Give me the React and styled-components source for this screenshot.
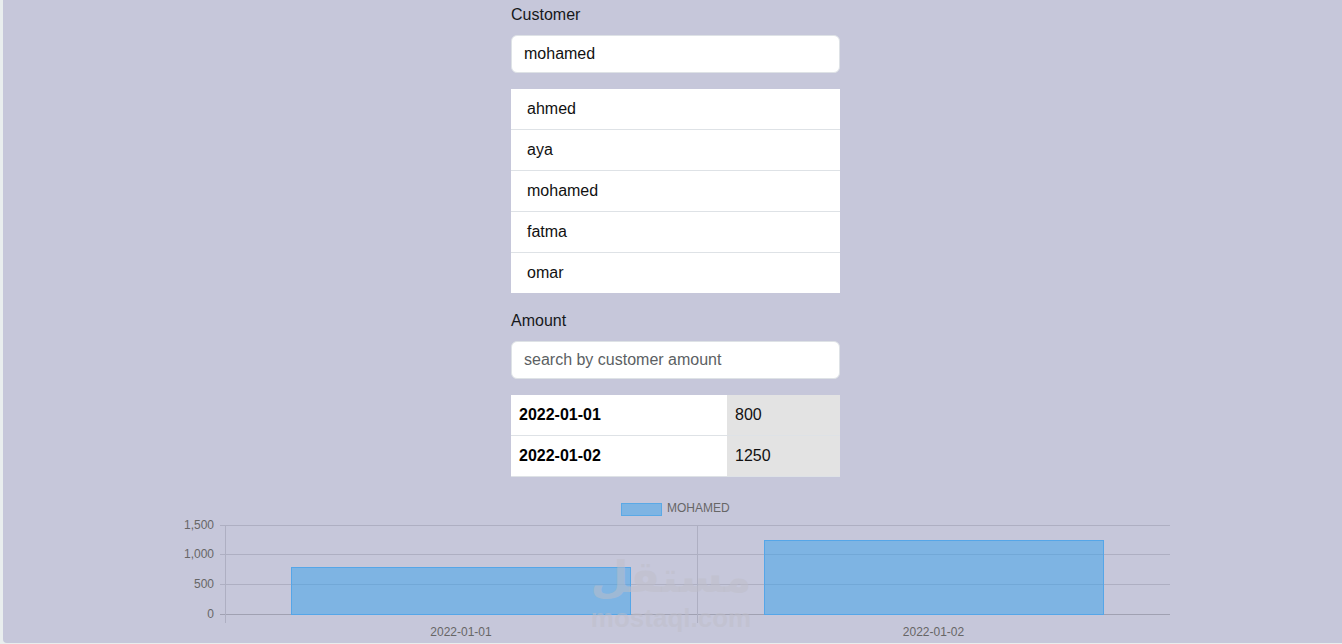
import React from 'react'
import styled, { createGlobalStyle } from 'styled-components'

const customers = ['ahmed', 'aya', 'mohamed', 'fatma', 'omar']
const amounts = [
  { date: '2022-01-01', amount: 800 },
  { date: '2022-01-02', amount: 1250 },
]
const ticks = [
  { label: '1,500', y: 525.5 },
  { label: '1,000', y: 554.5 },
  { label: '500', y: 584.5 },
  { label: '0', y: 614.5 },
]
const CHART_TOP = 495

const GlobalStyle = createGlobalStyle`
  html, body {
    margin: 0;
    height: 100%;
    overflow: hidden;
    background: #e9eeee;
  }
  body {
    font-family: "Liberation Sans", Arial, sans-serif;
  }
`

const Screen = styled.div`
  position: relative;
  box-sizing: border-box;
  height: 643px;
  margin-left: 3px;
  padding-left: 6px;
  background: #c6c7da;
  border-bottom-left-radius: 4px;
  overflow: hidden;
`

const Form = styled.div`
  width: 329px;
  margin: 0 auto;
  display: flex;
  flex-direction: column;
`

const Label = styled.label`
  font-size: 16px;
  line-height: 18px;
  color: #16181b;
  margin: ${(p) => p.$top || 6}px 0 11px;
`

const Input = styled.input`
  box-sizing: border-box;
  width: 100%;
  height: 38px;
  padding: 0 12px;
  border: 1px solid #dee2e6;
  border-radius: 6px;
  background: #fff;
  font: 16px "Liberation Sans", Arial, sans-serif;
  color: #111;
  outline: none;

  &::placeholder {
    color: #5c5f63;
    opacity: 1;
  }
`

const CustomerList = styled.ul`
  list-style: none;
  margin: 16px 0 0;
  padding: 0;
  background: #fff;
`

const CustomerItem = styled.li`
  box-sizing: border-box;
  height: 41px;
  padding: 0 16px;
  display: flex;
  align-items: center;
  font-size: 16px;
  color: #111;
  border-bottom: 1px solid #dee2e6;

  &:last-child {
    height: 40px;
    border-bottom: 0;
  }
`

const AmountTable = styled.table`
  width: 329px;
  margin-top: 16px;
  border-collapse: separate;
  border-spacing: 0;
  table-layout: fixed;
  font-size: 16px;
  color: #111;
`

const DateCell = styled.th`
  box-sizing: border-box;
  width: 216px;
  height: 41px;
  padding: 0 8px;
  border-bottom: 1px solid #dee2e6;
  background: #fff;
  color: #000;
  text-align: left;
  font-weight: 700;
`

const ValueCell = styled.td`
  box-sizing: border-box;
  height: 41px;
  padding: 0 8px;
  border-bottom: 1px solid #dee2e6;
  background: #e3e3e3;
`

const Chart = styled.svg`
  display: block;
  width: 991px;
  height: 148px;
  margin: 18px auto 0;
`

const AxisText = styled.text`
  font: 12px "Liberation Sans", Arial, sans-serif;
  fill: #666;
`

const Watermark = styled.div`
  position: absolute;
  left: 586px;
  top: 550px;
  width: 170px;
  text-align: center;
  color: rgba(190, 190, 200, 0.5);
  pointer-events: none;
`

const WatermarkArabic = styled.div`
  font: 700 44px/54px "DejaVu Sans", sans-serif;
  margin-bottom: 1px;
`

const WatermarkLatin = styled.div`
  font: 700 26px/26px "Liberation Sans", Arial, sans-serif;
`

// the chart coordinates below are page pixels, shifted into the svg box
const X = (x) => x - 180
const Y = (y) => y - CHART_TOP

const BarChart = () => (
  <Chart viewBox="0 0 991 148">
    <rect x={X(621.5)} y={Y(503.5)} width="40" height="12" fill="rgba(54,162,235,0.5)" stroke="#5aa9e6" />
    <AxisText x={X(667)} y={Y(512)}>MOHAMED</AxisText>

    {ticks.map((t) => (
      <g key={t.label}>
        <line x1={X(220)} x2={X(1170)} y1={Y(t.y)} y2={Y(t.y)} stroke={t.label === '0' ? '#a0a1b2' : '#aeafc2'} />
        <AxisText x={X(214)} y={Y(t.y + 3)} textAnchor="end">{t.label}</AxisText>
      </g>
    ))}
    <line x1={X(225.5)} x2={X(225.5)} y1={Y(525)} y2={Y(623)} stroke="#aeafc2" />
    <line x1={X(697.5)} x2={X(697.5)} y1={Y(525)} y2={Y(623)} stroke="#aeafc2" />

    <rect x={X(291.5)} y={Y(567.5)} width="339" height="47" fill="rgba(54,162,235,0.5)" stroke="#55a6e8" />
    <rect x={X(764.5)} y={Y(540.5)} width="339" height="74" fill="rgba(54,162,235,0.5)" stroke="#55a6e8" />

    <AxisText x={X(461)} y={Y(636)} textAnchor="middle">2022-01-01</AxisText>
    <AxisText x={X(933.5)} y={Y(636)} textAnchor="middle">2022-01-02</AxisText>
  </Chart>
)

export default function App() {
  return (
    <>
      <GlobalStyle />
      <Screen>
        <Form>
          <Label>Customer</Label>
          <Input defaultValue="mohamed" />
          <CustomerList>
            {customers.map((name) => (
              <CustomerItem key={name}>{name}</CustomerItem>
            ))}
          </CustomerList>
          <Label $top={19}>Amount</Label>
          <Input placeholder="search by customer amount" />
          <AmountTable>
            <tbody>
              {amounts.map((row) => (
                <tr key={row.date}>
                  <DateCell>{row.date}</DateCell>
                  <ValueCell>{row.amount}</ValueCell>
                </tr>
              ))}
            </tbody>
          </AmountTable>
        </Form>
        <BarChart />
      </Screen>
      <Watermark>
        <WatermarkArabic>مستقل</WatermarkArabic>
        <WatermarkLatin>mostaql.com</WatermarkLatin>
      </Watermark>
    </>
  )
}
